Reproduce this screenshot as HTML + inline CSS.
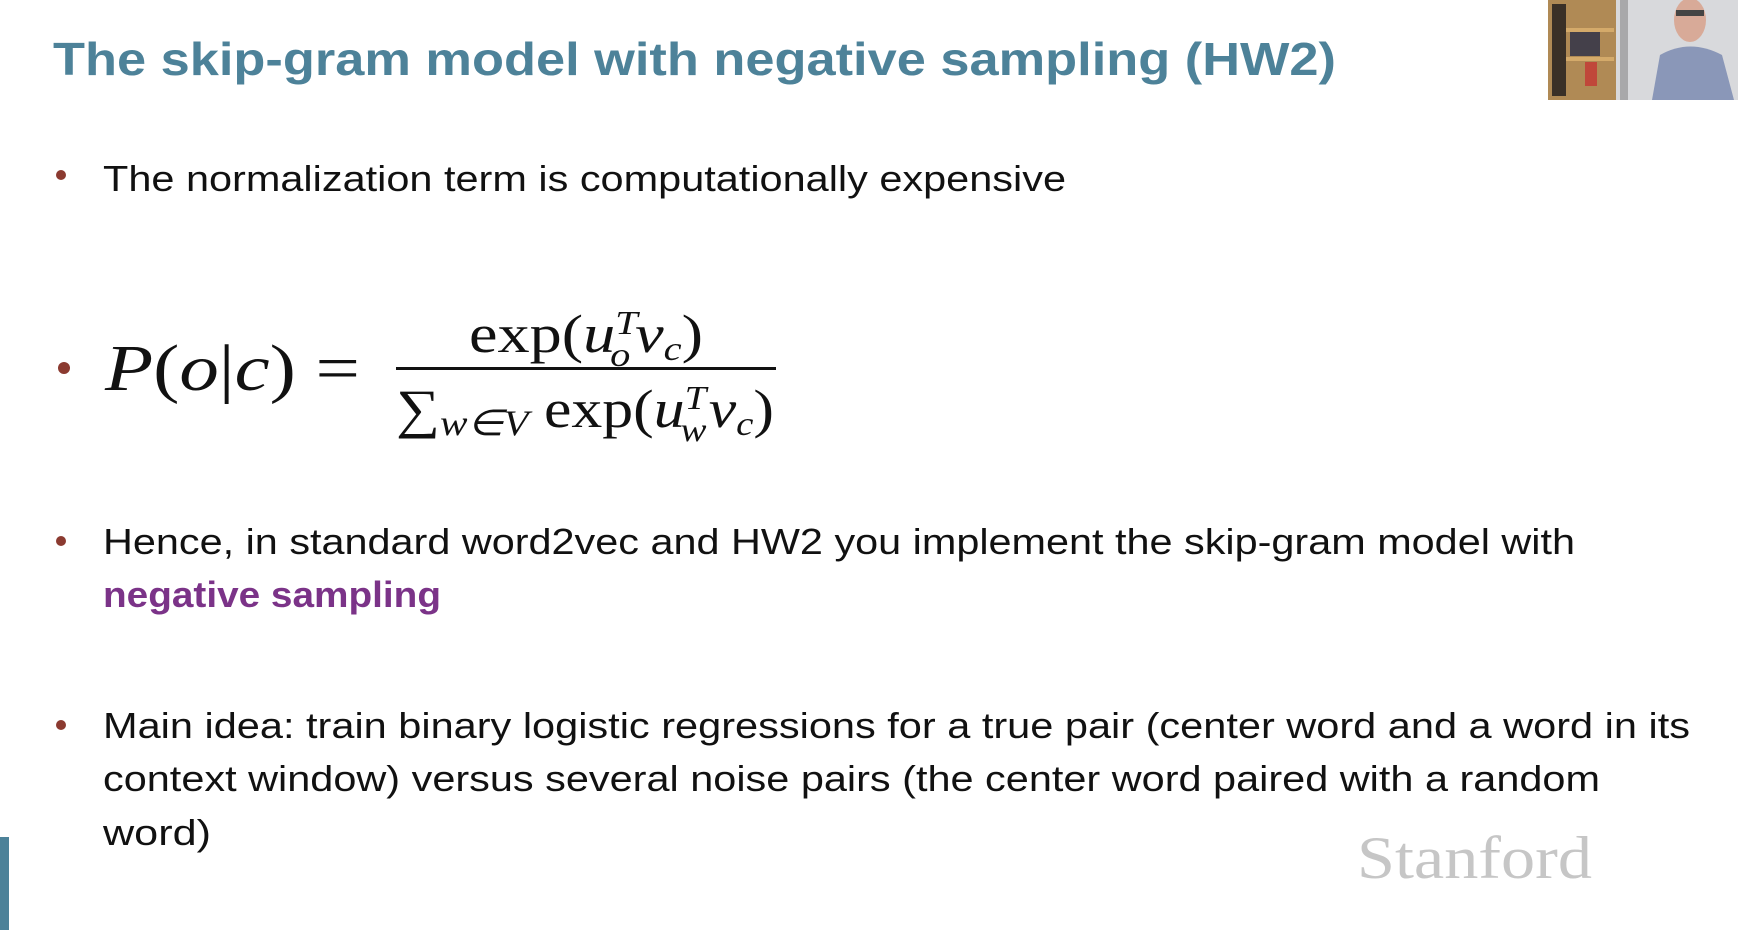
<!DOCTYPE html>
<html><head><meta charset="utf-8"><style>
html,body{margin:0;padding:0;background:#fff;width:1738px;height:930px;overflow:hidden}
svg{display:block}
</style></head><body>
<svg width="1738" height="930" viewBox="0 0 1738 930" xmlns="http://www.w3.org/2000/svg">
<rect width="1738" height="930" fill="#fff"/>
<text x="53" y="75" font-family="Liberation Sans, sans-serif" font-weight="bold" font-size="46" fill="#4d8299" textLength="1283" lengthAdjust="spacingAndGlyphs">The skip-gram model with negative sampling (HW2)</text>
<g>
<rect x="1548" y="0" width="190" height="100" fill="#d8d9dc"/>
<rect x="1548" y="0" width="68" height="100" fill="#b08a55"/>
<rect x="1552" y="4" width="14" height="92" fill="#3a3027"/>
<rect x="1566" y="28" width="48" height="4" fill="#d4aa6a"/>
<rect x="1566" y="57" width="48" height="4" fill="#d4aa6a"/>
<rect x="1570" y="32" width="30" height="24" fill="#44404a"/>
<rect x="1585" y="62" width="12" height="24" fill="#c0473a"/>
<rect x="1620" y="0" width="8" height="100" fill="#a8a8aa"/>
<ellipse cx="1690" cy="20" rx="16" ry="22" fill="#d8aa98"/>
<rect x="1676" y="10" width="28" height="6" fill="#444"/>
<path d="M1652 100 L1660 55 Q1690 38 1722 55 L1734 100 Z" fill="#8a97b8"/>
</g>
<g fill="#8b3a30">
<circle cx="61" cy="175" r="5"/>
<circle cx="64" cy="368" r="6"/>
<circle cx="61" cy="541" r="5"/>
<circle cx="61" cy="725" r="5"/>
</g>
<g font-family="Liberation Sans, sans-serif" font-size="36" fill="#111">
<text x="103" y="191" textLength="963" lengthAdjust="spacingAndGlyphs">The normalization term is computationally expensive</text>
<text x="103" y="554" textLength="1472" lengthAdjust="spacingAndGlyphs">Hence, in standard word2vec and HW2 you implement the skip-gram model with</text>
<text x="103" y="607" fill="#7b3388" font-weight="bold" textLength="338" lengthAdjust="spacingAndGlyphs">negative sampling</text>
<text x="103" y="738" textLength="1587" lengthAdjust="spacingAndGlyphs">Main idea: train binary logistic regressions for a true pair (center word and a word in its</text>
<text x="103" y="791" textLength="1497" lengthAdjust="spacingAndGlyphs">context window) versus several noise pairs (the center word paired with a random</text>
<text x="103" y="845" textLength="108" lengthAdjust="spacingAndGlyphs">word)</text>
</g>
<g font-family="Liberation Serif, serif" fill="#111">
<text x="105" y="390" font-size="66" textLength="255" lengthAdjust="spacingAndGlyphs"><tspan font-style="italic">P</tspan>(<tspan font-style="italic">o</tspan>|<tspan font-style="italic">c</tspan>) =</text>
<rect x="396" y="367" width="380" height="3"/>
<text x="469" y="352" font-size="54" textLength="234" lengthAdjust="spacingAndGlyphs">exp(<tspan font-style="italic">u</tspan><tspan font-style="italic" font-size="34" dy="-18">T</tspan><tspan font-style="italic" font-size="34" dx="-20" dy="32">o</tspan><tspan font-style="italic" dy="-14" dx="4">v</tspan><tspan font-style="italic" font-size="34" dy="8">c</tspan><tspan dy="-8">)</tspan></text>
<text x="396" y="427" font-size="54" textLength="378" lengthAdjust="spacingAndGlyphs">∑<tspan font-style="italic" font-size="36" dy="8">w∈V</tspan><tspan dy="-8"> exp(</tspan><tspan font-style="italic">u</tspan><tspan font-style="italic" font-size="34" dy="-18">T</tspan><tspan font-style="italic" font-size="34" dx="-20" dy="32">w</tspan><tspan font-style="italic" dy="-14" dx="2">v</tspan><tspan font-style="italic" font-size="34" dy="8">c</tspan><tspan dy="-8">)</tspan></text>
</g>
<text x="1357" y="878" font-family="Liberation Serif, serif" font-size="60" fill="#c6c6c6" textLength="235" lengthAdjust="spacingAndGlyphs">Stanford</text>
<rect x="0" y="837" width="9" height="93" fill="#4d8299"/>
</svg>
</body></html>
